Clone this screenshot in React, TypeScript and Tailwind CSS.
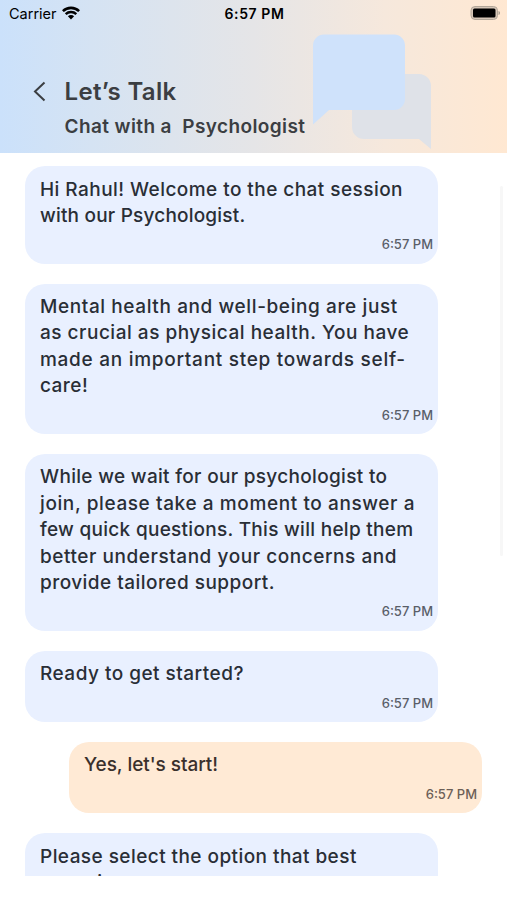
import { memo } from "react";

interface Message {
  id: number;
  mine?: boolean;
  lines: { text: string; tracking: string }[];
  time: string;
}

const messages: Message[] = [
  {
    id: 1,
    lines: [
      { text: "Hi Rahul! Welcome to the chat session", tracking: "tracking-[0.45px]" },
      { text: "with our Psychologist.", tracking: "tracking-[0.2px]" },
    ],
    time: "6:57 PM",
  },
  {
    id: 2,
    lines: [
      { text: "Mental health and well-being are just", tracking: "tracking-[0.6px]" },
      { text: "as crucial as physical health. You have", tracking: "tracking-[0.51px]" },
      { text: "made an important step towards self-", tracking: "tracking-[0.72px]" },
      { text: "care!", tracking: "tracking-[0.45px]" },
    ],
    time: "6:57 PM",
  },
  {
    id: 3,
    lines: [
      { text: "While we wait for our psychologist to", tracking: "tracking-[0.32px]" },
      { text: "join, please take a moment to answer a", tracking: "tracking-[0.6px]" },
      { text: "few quick questions. This will help them", tracking: "tracking-[0.29px]" },
      { text: "better understand your concerns and", tracking: "tracking-[0.55px]" },
      { text: "provide tailored support.", tracking: "tracking-[0.46px]" },
    ],
    time: "6:57 PM",
  },
  {
    id: 4,
    lines: [{ text: "Ready to get started?", tracking: "tracking-[0.48px]" }],
    time: "6:57 PM",
  },
  {
    id: 5,
    mine: true,
    lines: [{ text: "Yes, let's start!", tracking: "tracking-[-0.04px]" }],
    time: "6:57 PM",
  },
  {
    id: 6,
    lines: [
      { text: "Please select the option that best", tracking: "tracking-[0.44px]" },
      { text: "your signs", tracking: "tracking-[0.2px]" },
    ],
    time: "6:57 PM",
  },
];

const StatusBar = () => {
  return (
    <div className="h-7 pl-[9px] pr-[6px] grid grid-cols-[1fr_auto_1fr] items-center text-black">
      <div className="flex items-center gap-[5px]">
        <span className="text-[14.5px] leading-none">Carrier</span>
        <svg className="-mt-[2px]" width="18" height="14" viewBox="0 0 18 14" fill="none">
          <path d="M.9 5.200a11.500 11.500 0 0 1 16.200 0" stroke="#000" strokeWidth="2.6" />
          <path d="M3.700 8.200a7.600 7.600 0 0 1 10.600 0" stroke="#000" strokeWidth="2.4" />
          <path d="M9 13.400 5.900 10.300a4.400 4.400 0 0 1 6.200 0Z" fill="#000" />
        </svg>
      </div>
      <span className="pr-[1px] text-center text-[14px] leading-none font-semibold tracking-[0.6px] whitespace-nowrap">
        6:57 PM
      </span>
      <svg className="justify-self-end -mt-[2px]" width="31" height="14" viewBox="0 0 31 14">
        <rect x="1" y="0.5" width="26.5" height="13" rx="4" fill="#d6c6b7" stroke="#b2a698" />
        <rect x="3" y="2.5" width="22.5" height="9" rx="1.5" fill="#000" />
        <path d="M28.500 5c2 .6 2 3.400 0 4Z" fill="#a99d91" />
      </svg>
    </div>
  );
};

const Header = () => {
  return (
    <header className="relative h-[153px] shrink-0 bg-[linear-gradient(90deg,#cbe1fb_0%,#d5e3f3_18%,#e5e5e7_50%,#f6e8dc_76%,#ffe8d2_100%)]">
      {/* bubbles behind the title */}
      <svg
        className="absolute left-[312px] top-[33px]"
        width="120"
        height="118"
        viewBox="0 0 120 118"
      >
        <path
          d="M52 41H107A12 12 0 0 1 119 53V116L107 106H52A12 12 0 0 1 40 94V53A12 12 0 0 1 52 41Z"
          fill="#dfe2e8"
        />
        <path
          d="M12 1.500H82A11 11 0 0 1 93 12.500V66A11 11 0 0 1 82 77H17L1 91.500V12.500A11 11 0 0 1 12 1.500Z"
          fill="#cfe2fb"
        />
      </svg>
      <div className="relative">
        <StatusBar />
        <div className="pt-[49px] pl-[32px] flex items-start text-[#3b3e42]">
          <svg className="mt-[4px]" width="15" height="21" viewBox="0 0 15 21" fill="none">
            <path d="M12.500 1.500 3 10.500l9.500 9" stroke="#3b3e42" strokeWidth="2" />
          </svg>
          <div className="pl-[17.5px]">
            <h1 className="text-[24px] leading-[30px] font-semibold tracking-[0.32px]">
              Let’s Talk
            </h1>
            <p className="mt-[5px] text-[19px] leading-[30px] font-semibold tracking-[0.4px] whitespace-pre">
              Chat with a  Psychologist
            </p>
          </div>
        </div>
      </div>
    </header>
  );
};

const Bubble = ({ message }: { message: Message }) => {
  return (
    <div
      className={
        message.mine
          ? "w-[413px] shrink-0 self-end mr-[25px] rounded-[20px] bg-[#ffead5] text-[#3a302c] pt-[10.5px] pl-[15px] pr-[5px] pb-[9.25px]"
          : "w-[413px] shrink-0 self-start ml-[25px] rounded-[20px] bg-[#e9f0ff] text-[#292e36] pt-[10.5px] pl-[15px] pr-[5px] pb-[9.25px]"
      }
    >
      {message.lines.map((line) => (
        <p
          key={line.text}
          className={`text-[19px] leading-[26.4px] font-medium whitespace-nowrap ${line.tracking}`}
        >
          {line.text}
        </p>
      ))}
      <p className="mt-[5px] text-right text-[13px] leading-5 font-medium opacity-75">
        {message.time}
      </p>
    </div>
  );
};

const App = () => {
  return (
    <div className="w-full h-[900px] overflow-hidden flex flex-col bg-white font-['Inter','Liberation_Sans',sans-serif]">
      <Header />
      <main className="relative h-[723px] pt-[13px] flex flex-col gap-[20px] overflow-hidden">
        {messages.map((message) => (
          <Bubble key={message.id} message={message} />
        ))}
        {/* scroll indicator */}
        <div className="absolute right-[4px] top-[33px] w-[3px] h-[370px] rounded-full bg-[#f7f7f7]" />
      </main>
    </div>
  );
};

export default memo(App);
